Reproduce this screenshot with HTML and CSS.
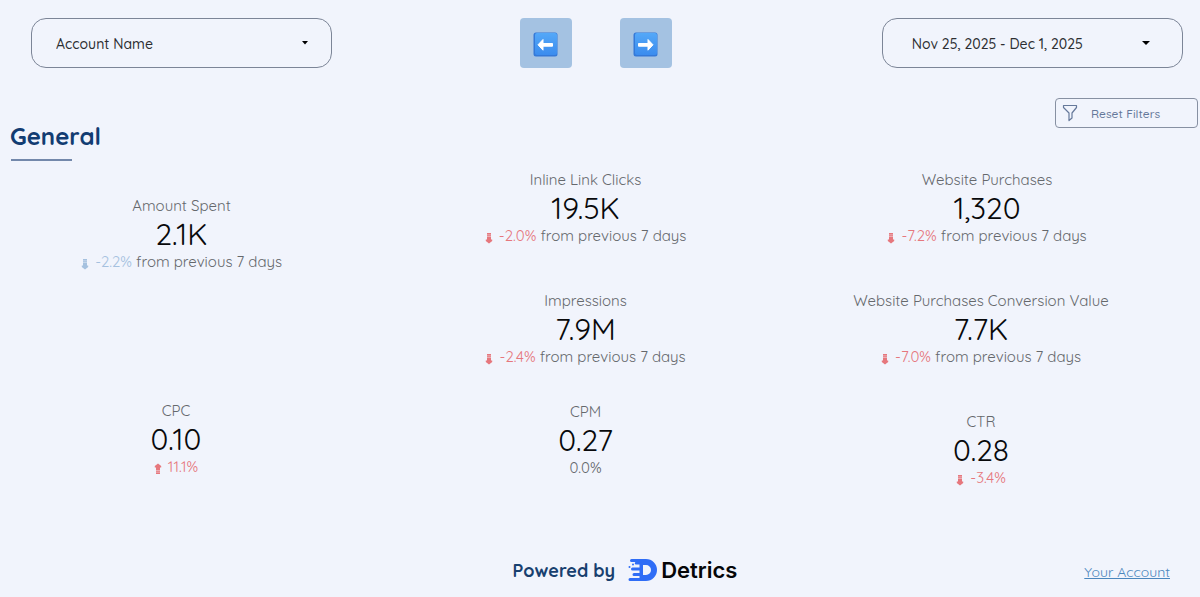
FILE: index.html
```html
<!DOCTYPE html>
<html lang="en">
<head>
<meta charset="utf-8">
<meta name="viewport" content="width=device-width, initial-scale=1">
<title>General</title>
<link rel="stylesheet" href="styles.css">
</head>
<body>
<svg class="defs" width="0" height="0" aria-hidden="true">
  <defs>
    <linearGradient id="key" x1="0" y1="0" x2="0" y2="1"><stop offset="0" stop-color="#54a8f8"/><stop offset="1" stop-color="#3b8cee"/></linearGradient>
    <symbol id="delta" viewBox="0 0 8 12"><path d="M2 1h4v1.500H2zM2 3.300h4v1H2zM2 5h4v2.500h1.200v1.500L4 11.500.8 9V7.500H2z" fill="currentColor"/><path d="M2 1h4v7H2z" fill="currentColor" opacity=".4"/></symbol>
  </defs>
</svg>
<header class="toolbar">
  <div class="field">
    <select class="control" aria-label="Account"><option>Account Name</option></select>
    <svg class="caret" viewBox="0 0 6 4" aria-hidden="true"><path d="M0 0h6L3 3.500z"/></svg>
  </div>
  <nav class="pager" aria-label="Pages">
    <button class="page-button" type="button" aria-label="Previous page">
      <svg viewBox="0 0 25 25"><rect x=".5" y=".5" width="24" height="24" rx="2.500" fill="#3479d8"/><rect x="2" y="1" width="22" height="22" rx="2" fill="url(#key)"/><path d="M10 7.500v4h9.500v2.700H10v4L5 12.800z" fill="#fff" stroke="#fff" stroke-linejoin="round"/></svg>
    </button>
    <button class="page-button" type="button" aria-label="Next page">
      <svg viewBox="0 0 25 25"><rect x=".5" y=".5" width="24" height="24" rx="2.500" fill="#3479d8"/><rect x="2" y="1" width="22" height="22" rx="2" fill="url(#key)"/><path d="M15 7.500v4H5.500v2.700H15v4l5-5.400z" fill="#fff" stroke="#fff" stroke-linejoin="round"/></svg>
    </button>
  </nav>
  <button class="control date-range" type="button">Nov 25, 2025 - Dec 1, 2025
    <svg class="date-caret" viewBox="0 0 8 4" aria-hidden="true"><path d="M0 0h8L4 4z"/></svg>
  </button>
</header>
<main>
  <div class="section-head">
    <h1 class="title">General</h1>
    <button class="reset" type="button">
      <svg class="funnel" viewBox="0 0 16 18" aria-hidden="true"><path d="M1.500 1.500h13v2L10 9v5l-3 2.500V9L1.500 3.500z" fill="none" stroke="currentColor" stroke-width="1.200" stroke-linejoin="round"/></svg>
      Reset Filters
    </button>
  </div>
  <div class="metrics">
    <div class="column column-spend">
      <section class="metric"><h2 class="label">Amount Spent</h2><p class="value">2.1K</p><p class="change"><span class="blue"><svg class="arrow"><use href="#delta"/></svg> -2.2%</span> from previous 7 days</p></section>
      <section class="metric metric-cpc"><h2 class="label">CPC</h2><p class="value">0.10</p><p class="change"><span class="red"><svg class="arrow up"><use href="#delta"/></svg> 11.1%</span></p></section>
    </div>
    <div class="column">
      <section class="metric"><h2 class="label">Inline Link Clicks</h2><p class="value">19.5K</p><p class="change"><span class="red"><svg class="arrow"><use href="#delta"/></svg> -2.0%</span> from previous 7 days</p></section>
      <section class="metric"><h2 class="label">Impressions</h2><p class="value">7.9M</p><p class="change"><span class="red"><svg class="arrow"><use href="#delta"/></svg> -2.4%</span> from previous 7 days</p></section>
      <section class="metric metric-cost"><h2 class="label">CPM</h2><p class="value">0.27</p><p class="change">0.0%</p></section>
    </div>
    <div class="column">
      <section class="metric metric-purchases"><h2 class="label">Website Purchases</h2><p class="value">1,320</p><p class="change"><span class="red"><svg class="arrow"><use href="#delta"/></svg> -7.2%</span> from previous 7 days</p></section>
      <section class="metric"><h2 class="label">Website Purchases Conversion Value</h2><p class="value">7.7K</p><p class="change"><span class="red"><svg class="arrow"><use href="#delta"/></svg> -7.0%</span> from previous 7 days</p></section>
      <section class="metric"><h2 class="label">CTR</h2><p class="value">0.28</p><p class="change"><span class="red"><svg class="arrow"><use href="#delta"/></svg> -3.4%</span></p></section>
    </div>
  </div>
</main>
<footer class="footer">
  <div class="brand">
    <span class="powered">Powered by</span>
    <svg class="logo" viewBox="0 0 29 22" aria-hidden="true">
      <path d="M3.500 0H18a11 11 0 0 1 0 22H2a1.500 1.500 0 0 1 0-3h9.500v-2H6a1.500 1.500 0 0 1 0-3h5.500v-2.500H4.500a1.500 1.500 0 0 1 0-3h7V5.500H8A1.200 1.200 0 0 1 8 3H3.500a1.500 1.500 0 0 1 0-3zM15 6v10h3a5 5 0 0 0 0-10z" fill="#2f6df6" fill-rule="evenodd"/>
      <circle cx="1.500" cy="8" r="1" fill="#2f6df6"/><circle cx="5" cy="5.500" r="1" fill="#2f6df6"/>
    </svg>
    <span class="brand-name">Detrics</span>
  </div>
  <a class="account" href="#">Your Account</a>
</footer>
</body>
</html>
```
FILE: styles.css
```css
* { box-sizing: border-box; }
body {
  margin: 0;
  background: #f1f4fc;
  color: #65686c;
  font-family: Quicksand, Lato, sans-serif;
}
button, select { font: inherit; cursor: pointer; }
.defs { position: absolute; }

.toolbar {
  display: grid;
  grid-template-columns: 301fr 549fr 301fr;
  align-items: center;
  padding: 18px 17px 0 31px;
}
.field { position: relative; }
.control {
  width: 100%;
  height: 50px;
  border: 1px solid #7c8597;
  border-radius: 15px;
  background: transparent;
  color: #2c2e31;
  font-size: 14px;
  font-weight: 500;
  text-align: left;
}
select.control { appearance: none; padding: 2px 24px 0; }
.caret {
  position: absolute;
  top: 23px;
  right: 24px;
  width: 6px;
  height: 4px;
  pointer-events: none;
}
.date-range {
  display: flex;
  align-items: center;
  justify-content: space-between;
  padding: 2px 32px 0 29px;
}
.date-caret { width: 8px; height: 4px; margin-bottom: 2px; }
.pager { display: flex; justify-content: center; gap: 48px; padding-right: 22px; }
.page-button {
  display: grid;
  place-items: center;
  width: 52px;
  height: 50px;
  padding: 2px 0 0;
  border: 0;
  border-radius: 4px;
  background: #a4c2e2;
}
.page-button svg { width: 25px; height: 25px; }

.section-head {
  display: flex;
  align-items: flex-start;
  justify-content: space-between;
  padding: 30px 2px 0 10px;
}
.title {
  margin: 24px 0 0;
  color: #123c72;
  font-size: 24px;
  font-weight: 700;
  line-height: 28px;
}
.title::after {
  content: "";
  display: block;
  width: 61px;
  height: 2px;
  margin: 9px 0 0 1px;
  background: #7388ab;
}
.reset {
  display: flex;
  align-items: center;
  gap: 13px;
  width: 143px;
  height: 30px;
  padding: 0 6px;
  border: 1px solid #8790a2;
  border-radius: 4px;
  background: transparent;
  color: #65789a;
  font-size: 12px;
  font-weight: 500;
}
.funnel { width: 16px; height: 18px; }

.metrics {
  display: grid;
  grid-template-columns: 363fr 445fr 346fr;
  padding: 7px 46px 0 0;
}
.column { display: flex; flex-direction: column; gap: 41px; text-align: center; }
.column-spend { padding-top: 26px; gap: 125px; }
.metric-cpc { padding-right: 11px; }
.metric-cost { margin-top: -10px; }
.metric-purchases { padding-left: 12px; }
.label, .value, .change { margin: 0; font-weight: 400; }
.label, .change { font-size: 15px; line-height: 24px; white-space: nowrap; }
.value { color: #08090b; font-size: 30px; line-height: 32px; }
.red { color: #e6777d; }
.blue { color: #a5c1df; }
.arrow { width: 8px; height: 12px; margin-right: 2px; vertical-align: -3px; }
.up { transform: rotate(180deg); }

.footer {
  display: grid;
  grid-template-columns: 1fr auto 1fr;
  align-items: center;
  padding: 67px 30px 12px 80px;
}
.brand { display: flex; align-items: center; grid-column: 2; }
.powered { color: #18406f; font-size: 18px; font-weight: 700; }
.logo { width: 29px; height: 22px; margin: 0 4px 0 13px; }
.brand-name { color: #050608; font-family: Inter, sans-serif; font-size: 22px; font-weight: 600; }
.account { justify-self: end; padding-top: 4px; color: #4a86bd; font-size: 14px; }
```
